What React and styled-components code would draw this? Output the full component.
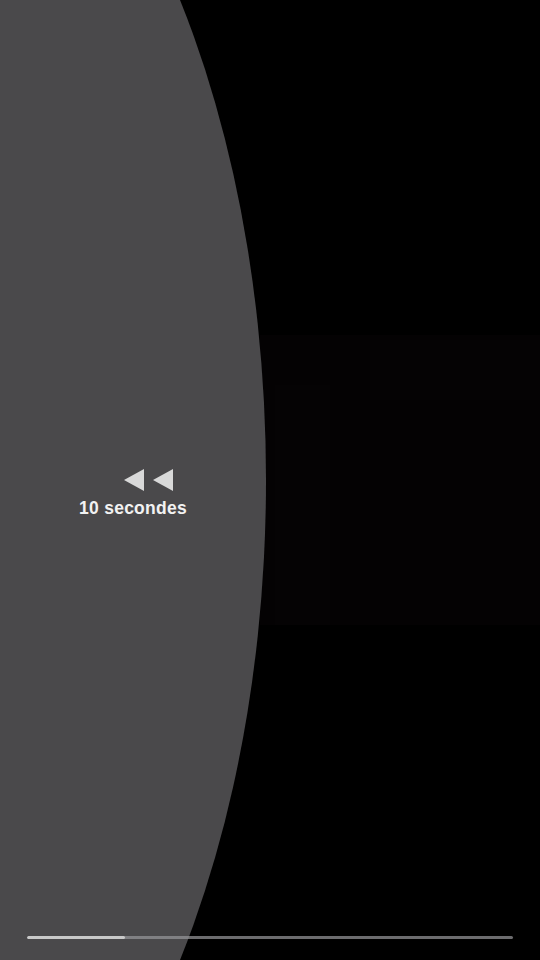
import styled, { createGlobalStyle } from 'styled-components';

const GlobalStyle = createGlobalStyle`
    html, body {
        margin: 0;
        padding: 0;
        background: #000;
    }
    body {
        font-family: "Liberation Sans", Arial, sans-serif;
    }
`;

const Stage = styled.div`
    position: relative;
    width: 540px;
    height: 960px;
    overflow: hidden;
    background: #000;
    display: flex;
    flex-direction: column;
`;

const VideoFrame = styled.svg`
    position: absolute;
    left: 0;
    top: 0;
    width: 540px;
    height: 960px;
`;

const SeekOverlay = styled.div`
    position: absolute;
    left: -594px;
    top: -320px;
    width: 860px;
    height: 1600px;
    border-radius: 50%;
    background: #4a494b;
`;

const Hud = styled.div`
    position: relative;
    flex: 1;
    width: 266px;
    padding-top: 469px;
    box-sizing: border-box;
    display: flex;
    flex-direction: column;
    align-items: center;
    gap: 7px;
`;

const RewindIcon = styled.svg`
    width: 50px;
    height: 22px;
    margin-left: 31px;
    display: block;
`;

const Label = styled.div`
    color: #f2f2f2;
    font-size: 17.5px;
    line-height: 20px;
    font-weight: 700;
    letter-spacing: 0.25px;
`;

const ProgressWrap = styled.div`
    position: relative;
    padding: 0 27px 21px;
`;

const Track = styled.div`
    height: 3px;
    border-radius: 2px;
    background: rgba(150, 150, 152, 0.72);
    overflow: hidden;
`;

const Fill = styled.div`
    height: 100%;
    background: #c9c9c9;
    border-radius: 2px;
`;

const App = () => {
    const progress = 98 / 486;
    return (
        <>
            <GlobalStyle />
            <Stage>
                <VideoFrame viewBox="0 0 540 960">
                    <rect x="260" y="335" width="280" height="290" fill="#040203" />
                    <rect x="370" y="340" width="170" height="60" fill="#050304" />
                    <rect x="275" y="385" width="55" height="240" fill="#050304" />
                </VideoFrame>
                <SeekOverlay />
                <Hud>
                    <RewindIcon viewBox="0 0 50 22">
                        <polygon points="0,11 20,0 20,22" fill="#d9d9d9" />
                        <polygon points="29,11 49,0 49,22" fill="#d9d9d9" />
                    </RewindIcon>
                    <Label>10 secondes</Label>
                </Hud>
                <ProgressWrap>
                    <Track>
                        <Fill style={{ width: `${progress * 100}%` }} />
                    </Track>
                </ProgressWrap>
            </Stage>
        </>
    );
};

export default App;
